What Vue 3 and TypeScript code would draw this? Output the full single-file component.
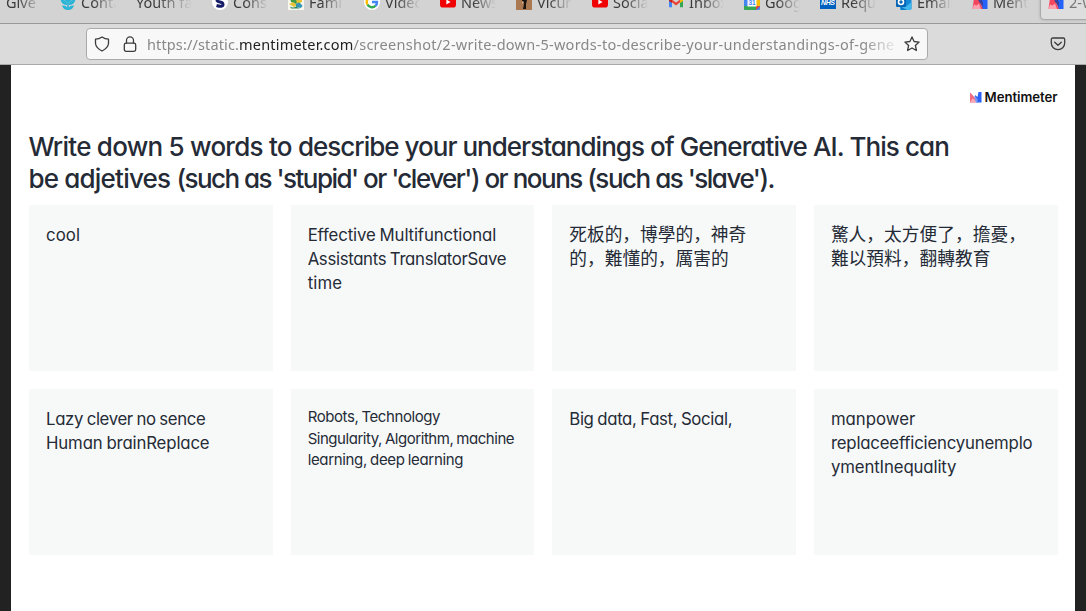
<script setup lang="ts">
interface Tab { icon: string; label: string }
interface Line { text: string; width: number }
interface Card { lines: Line[]; small?: boolean; cjk?: boolean }

const tabs: Tab[] = [
  { icon: 'page', label: 'Give' },
  { icon: 'flower', label: 'Conta' },
  { icon: '', label: 'Youth fac' },
  { icon: 's', label: 'Cons' },
  { icon: 'family', label: 'Fami' },
  { icon: 'google', label: 'Video' },
  { icon: 'youtube', label: 'News' },
  { icon: 'portrait', label: 'Vicur' },
  { icon: 'youtube', label: 'Socia' },
  { icon: 'gmail', label: 'Inbox' },
  { icon: 'calendar', label: 'Goog' },
  { icon: 'nhs', label: 'Requ' },
  { icon: 'outlook', label: 'Email' },
  { icon: 'menti', label: 'Ment' },
  { icon: 'menti', label: '2-W' },
]

const heading: Line[][] = [
  [
    { text: 'Write down 5 words to ', width: 269.5 },
    { text: 'describe your understandings ', width: 352 },
    { text: 'of Generative AI. This can', width: 299 },
  ],
  [
    { text: 'be adjetives ', width: 148 },
    { text: "(such as 'stupid' or 'clever') ", width: 308 },
    { text: "or nouns (such as 'slave').", width: 289.5 },
  ],
]

const cards: Card[] = [
  { lines: [{ text: 'cool', width: 34 }] },
  { lines: [
    { text: 'Effective Multifunctional', width: 188.5 },
    { text: 'Assistants TranslatorSave', width: 198.5 },
    { text: 'time', width: 34.5 },
  ] },
  { cjk: true, lines: [{ text: '死板的，博學的，神奇', width: 177 }, { text: '的，難懂的，厲害的', width: 159.5 }] },
  { cjk: true, lines: [{ text: '驚人，太方便了，擔憂，', width: 195 }, { text: '難以預料，翻轉教育', width: 159.5 }] },
  { lines: [{ text: 'Lazy clever no sence', width: 159.5 }, { text: 'Human brainReplace', width: 163.5 }] },
  { small: true, lines: [
    { text: 'Robots, Technology', width: 132.5 },
    { text: 'Singularity, Algorithm, machine', width: 206.5 },
    { text: 'learning, deep learning', width: 155.5 },
  ] },
  { lines: [{ text: 'Big data, Fast, Social,', width: 163 }] },
  { lines: [
    { text: 'manpower', width: 84.5 },
    { text: 'replaceefficiencyunemplo', width: 201.5 },
    { text: 'ymentInequality', width: 125.5 },
  ] },
]

// Tracks a line of text so that it fills the given width.
const vFit = {
  mounted(el: HTMLElement, binding: { value: number }) {
    const natural = el.getBoundingClientRect().width
    const count = Array.from(el.textContent ?? '').length
    el.style.letterSpacing = `${(binding.value - natural) / count}px`
  },
}
</script>

<template>
  <div class="window">
    <div class="tabstrip">
      <div v-for="(tab, i) in tabs" :key="i" class="tab" :class="{ active: i === tabs.length - 1 }">
        <svg v-if="tab.icon" class="favicon" viewBox="0 0 16 16">
          <g v-if="tab.icon === 'flower'" fill="#2ab5d8">
            <path d="M8 0l4 2v4L8 9 4 6V2Z" />
            <path d="M.5 5.500Q5 5.500 7.200 9v2Q1.500 11 .5 5.500ZM15.500 5.500Q11 5.500 8.800 9v2q5.700 0 6.700-5.500Z" />
            <path d="M2 11.500q4-.5 5.200 2V8h1.600v5.500q1.200-2.500 5.200-2-1.500 4.500-6 4.500t-6-4.500Z" />
          </g>
          <g v-else-if="tab.icon === 's'">
            <circle cx="8" cy="8" r="8" fill="#fff" />
            <path d="M11.500 4.500Q5 2.500 5 6q0 1.500 3 2t3 2.500q0 3-6.500 1" fill="none" stroke="#171d68" stroke-width="3" />
          </g>
          <g v-else-if="tab.icon === 'family'">
            <rect width="16" height="16" fill="#f7f7ef" />
            <path d="M2 4h6l3 3-3 3-5-2Z" fill="#3f9b48" />
            <path d="M8 5h6v3l-5 2Z" fill="#e6c431" />
            <path d="M1 10l4-2 4 3-3 2Z" fill="#e4c23a" />
            <path d="M8 10q3-3 5 0t2 1l-2 3-5-1Z" fill="#3595b5" />
            <path d="M2 12.500q3 2 6 0l4 2H3Z" fill="#35885a" />
          </g>
          <g v-else-if="tab.icon === 'google'">
            <circle cx="8" cy="8" r="8" fill="#fff" />
            <g fill="none" stroke-width="2.400">
              <path d="M11.800 4.200A5.200 5.200 0 0 0 3.500 5.300" stroke="#ea4335" />
              <path d="M3.500 5.300a5.200 5.200 0 0 0 0 5.400" stroke="#fbbc05" />
              <path d="M3.500 10.700a5.200 5.200 0 0 0 8 1.200" stroke="#34a853" />
              <path d="M11.500 11.900A5 5 0 0 0 13 8H8" stroke="#4285f4" />
            </g>
          </g>
          <g v-else-if="tab.icon === 'youtube'">
            <rect y="2.500" width="16" height="11" rx="2.800" fill="#f00000" />
            <path d="M6.300 5.500v5L10.600 8Z" fill="#fff" />
          </g>
          <g v-else-if="tab.icon === 'portrait'">
            <rect width="16" height="16" fill="#aa7951" />
            <path d="M6 2l4 1 1 3-1 4v5H7l1-5-2-2Z" fill="#171310" />
            <path d="M6 7l2 1-1 2-1-1Z" fill="#dfb590" />
          </g>
          <g v-else-if="tab.icon === 'gmail'">
            <path d="M1 4v9.300h3V7.500Z" fill="#4285f4" />
            <path d="M15 4v9.300h-3V7.500Z" fill="#34a853" />
            <path d="M1 3.500L8 8.500l7-5V6l-7 5.500L1 6Z" fill="#ea4335" />
            <path d="M12 6.200l3-2.300V7l-3 2Z" fill="#fbbc04" />
            <path d="M1 3.900l3 2.300V9L1 7Z" fill="#c5221f" />
          </g>
          <g v-else-if="tab.icon === 'calendar'">
            <rect width="16" height="16" rx="1.500" fill="#4285f4" />
            <path d="M12 4h4v8h-4Z" fill="#fbbc04" />
            <path d="M0 12h12v4H1.500Q0 16 0 14.500Z" fill="#34a853" />
            <path d="M12 12h4l-4 4Z" fill="#ea4335" />
            <path d="M3.500 3.500h9v9h-9Z" fill="#fff" />
            <text x="8" y="10.700" text-anchor="middle" class="day">31</text>
          </g>
          <g v-else-if="tab.icon === 'nhs'">
            <rect y="-1" width="16" height="16" fill="#0060bd" />
            <text x="8" y="10.800" text-anchor="middle" textLength="14" class="nhs">NHS</text>
          </g>
          <g v-else-if="tab.icon === 'outlook'">
            <path d="M4 0h11.500v14.500L14 16H5l-1-1Z" fill="#1688d8" />
            <path d="M4 9l6 3.500L15.500 8v7l-1 1H4Z" fill="#42b7ee" />
            <path d="M4 12l7 4H5Z" fill="#117cc6" />
            <rect y="3" width="10" height="10" rx="1" fill="#0765b6" />
            <circle cx="5" cy="8" r="2.500" fill="none" stroke="#fff" stroke-width="1.600" />
          </g>
          <g v-else-if="tab.icon === 'menti'">
            <path d="M8 2h7.500v13H10Z" fill="#2462fa" />
            <path d="M2 4h4l5 11H.500Z" fill="#f4475e" />
            <path d="M.500 15L2 10.500l2.500 1L7 9.500 9 15Z" fill="#fda1ae" />
            <path d="M7 2h1.500L11 9v4L6.500 7Z" fill="#39409c" />
          </g>
        </svg>
        <span class="label">{{ tab.label }}</span>
      </div>
    </div>

    <div class="toolbar">
      <div class="urlbar">
        <svg class="tool" viewBox="0 0 16 16">
          <path d="M8 1Q11 3 14.500 3.200V7.500Q14 12 8 15Q2 12 1.500 7.500V3.200Q5 3 8 1Z" />
        </svg>
        <svg class="tool lock" viewBox="0 0 16 16">
          <rect x="2.300" y="7.200" width="11.400" height="8.100" rx="1.800" />
          <path d="M4.500 7V4.400a3.500 3.500 0 0 1 7 0V7" />
        </svg>
        <div class="address">
          <span v-fit="92">https://static.</span><span v-fit="114.5" class="domain">mentimeter.com</span><span v-fit="541">/screenshot/2-write-down-5-words-to-describe-your-understandings-of-gene</span>
        </div>
        <svg class="tool star" viewBox="0 0 16 16">
          <path d="M8 .9l2.100 4.600 5 .6-3.700 3.400 1 5L8 12l-4.400 2.500 1-5L.9 6.100l5-.6Z" />
        </svg>
      </div>
      <svg class="tool pocket" viewBox="0 0 16 16">
        <path d="M2.800 2h10.400q1.500 0 1.500 1.500V7a6.700 6.700 0 0 1-13.400 0V3.500Q1.300 2 2.800 2Z" />
        <path d="M4.700 6.200L8 9.300l3.300-3.100" />
      </svg>
    </div>

    <div class="viewport">
      <main class="slide">
        <div class="brand">
          <svg viewBox="0 0 12 12">
            <path d="M8.500 1h3v10.500H5.500L5 4l2.500 2Z" fill="#2b62f6" />
            <path d="M0 1.500L2.500 4 5 7v4.500H0Z" fill="#ef6a80" />
            <path d="M0 11.500l2.500-4L5 9l1.500 2.500Z" fill="#fda8b5" />
            <path d="M4 4.500L7.500 8v3.500H6Z" fill="#7f96f2" />
          </svg>
          <span v-fit="73">Mentimeter</span>
        </div>
        <h1>
          <div v-for="(line, i) in heading" :key="i" class="heading-line"><span v-for="part in line" :key="part.text" v-fit="part.width">{{ part.text }}</span></div>
        </h1>
        <div class="cards">
          <section v-for="(card, i) in cards" :key="i" class="card" :class="{ small: card.small, cjk: card.cjk }">
            <div v-for="line in card.lines" :key="line.text"><span v-fit="line.width">{{ line.text }}</span></div>
          </section>
        </div>
      </main>
    </div>
  </div>
</template>

<style>
body { margin: 0; overflow: hidden; }
</style>

<style scoped>
.window {
  width: 1086px;
  height: 611px;
  display: flex;
  flex-direction: column;
  overflow: hidden;
  background: #222;
}
.tabstrip {
  box-sizing: border-box;
  flex: none;
  height: 24px;
  display: flex;
  overflow: hidden;
  background: #d3d3d3;
  border-bottom: 1px solid #999;
  font-family: "Noto Sans", sans-serif;
  font-size: 14.5px;
  color: #3b3b3b;
}
.tab {
  flex: none;
  box-sizing: border-box;
  width: 76px;
  height: 36px;
  margin-top: -16px;
  padding-right: 20px;
  display: flex;
  align-items: center;
  gap: 5px;
}
.tab:first-child { margin-left: -15px; width: 75px; padding-right: 19px; }
.tab:first-child .label { margin-left: 0; }
.tab.active {
  width: 90px;
  margin-left: -8px;
  padding-left: 7px;
  border: 1px solid #aaa;
  border-radius: 4px;
  background: #dedede;
  color: #777;
  box-shadow: 0 0 3px #aaa;
}
.favicon { width: 16px; height: 16px; flex: none; overflow: visible; margin-top: -1px; }
.label {
  flex: 1;
  min-width: 0;
  overflow: hidden;
  white-space: nowrap;
  line-height: 20px;
  mask-image: linear-gradient(to right, #000 35%, transparent 100%);
}
.day { font: bold 6.5px "Liberation Sans", sans-serif; fill: #4285f4; }
.nhs { font: italic bold 7px "Liberation Sans", sans-serif; fill: #fff; }

.toolbar {
  box-sizing: border-box;
  flex: none;
  height: 41px;
  display: flex;
  align-items: center;
  padding: 0 20px 0 86px;
  background: #dbdbdb;
  border-bottom: 1px solid #a9a9a9;
}
.urlbar {
  box-sizing: border-box;
  width: 842px;
  height: 32px;
  display: flex;
  align-items: center;
  padding: 0 7px;
  background: #f8f8f8;
  border: 1px solid #aaa;
  border-radius: 4px;
}
.tool {
  flex: none;
  width: 16px;
  height: 16px;
  fill: none;
  stroke: #3c3c3c;
  stroke-width: 1.3;
  stroke-linejoin: round;
  stroke-linecap: round;
}
.lock { margin-left: 12px; }
.star { margin-left: 8px; }
.pocket { margin-left: 122px; }
.address {
  width: 750px;
  margin-left: 9px;
  overflow: hidden;
  white-space: nowrap;
  font-family: "Noto Sans", sans-serif;
  font-size: 14.5px;
  line-height: 24px;
  color: #888;
  mask-image: linear-gradient(to right, #000 95.5%, transparent 100.5%);
}
.domain { color: #222; }

.viewport { flex: 1; display: flex; padding: 0 11px; background: #222; }
.slide {
  box-sizing: border-box;
  width: 1064px;
  padding: 24px 17.5px 0 18px;
  background: #fff;
  color: #252b36;
  font-family: Inter, "Noto Sans CJK TC", sans-serif;
  font-feature-settings: "cv11", "calt" 0;
}
.brand {
  height: 16px;
  display: flex;
  align-items: center;
  justify-content: flex-end;
  gap: 3px;
  font-size: 13.2px;
  font-weight: 600;
  line-height: 16px;
  color: #111;
  font-feature-settings: normal;
  white-space: nowrap;
}
.brand svg { width: 12px; height: 12px; }
h1 {
  margin: 26px 0 0;
  font-size: 26px;
  font-weight: 500;
  line-height: 32px;
}
.heading-line { margin-left: -0.6px; white-space: pre; }
.cards {
  display: grid;
  grid-template-columns: repeat(4, 1fr);
  grid-auto-rows: 166px;
  gap: 18px;
  margin-top: 10px;
}
.card {
  box-sizing: border-box;
  min-width: 0;
  padding: 17.6px 17px;
  background: #f7f9f9;
  font-size: 16.8px;
  line-height: 24.3px;
  word-spacing: -0.7px;
  white-space: nowrap;
}
.card.cjk { padding-top: 16px; font-family: "Noto Sans CJK SC", sans-serif; font-size: 17.7px; }
.card.small { padding-top: 16.8px; font-size: 15px; line-height: 21.7px; }
</style>
